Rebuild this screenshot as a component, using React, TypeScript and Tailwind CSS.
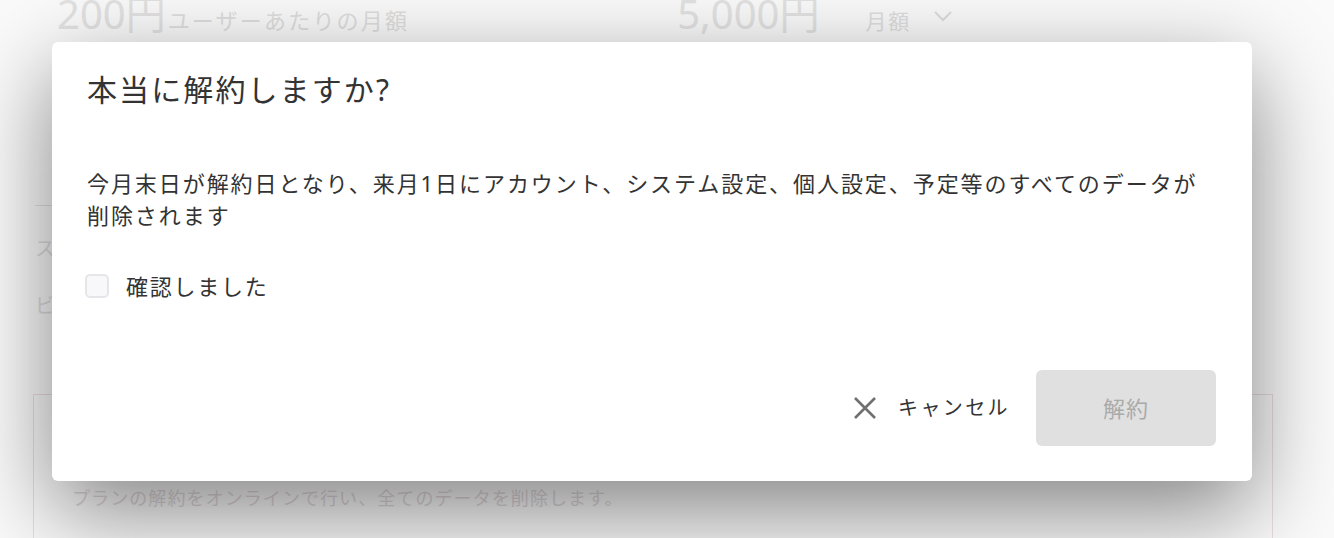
import React, { useState } from 'react';

const font = '"Noto Sans", "Noto Sans CJK JP", sans-serif';

function CloseIcon() {
  return (
    <svg width="24" height="24" viewBox="0 0 24 24" fill="none">
      <path d="M2 2 L22 22 M22 2 L2 22" stroke="#707070" strokeWidth="2.6" strokeLinecap="butt" />
    </svg>
  );
}

function ChevronIcon() {
  return (
    <svg width="20" height="12" viewBox="0 0 20 12" fill="none">
      <path d="M2 2 L10 10 L18 2" stroke="#dcdcdc" strokeWidth="2" />
    </svg>
  );
}

// Page behind the dialog (dimmed)
function BackgroundPage() {
  return (
    <div className="flex flex-col">
      <div className="flex items-baseline -mt-[8px] pl-[57px] h-[48px]">
        <span className="text-[40px] leading-[44px] text-[#e2e2e2]">200円</span>
        <span className="text-[22px] tracking-[0.1em] text-[#dedede] ml-[2px]">ユーザーあたりの月額</span>
        <span className="text-[40px] leading-[44px] text-[#e2e2e2] ml-[268px]">5,000円</span>
        <span className="text-[21px] tracking-[0.08em] text-[#dedede] ml-[46px]">月額</span>
        <span className="ml-[22px] self-center"><ChevronIcon /></span>
      </div>
      <div className="ml-[35px] mr-[120px] mt-[165px] border-t border-[#e2e2e2]" />
      <div className="pl-[35px] mt-[28px] text-[20px] leading-[30px] text-[#dedede]">ステータス</div>
      <div className="pl-[35px] mt-[27px] text-[20px] leading-[30px] text-[#dedede]">ビジネスプラン</div>
      <div className="ml-[33px] mr-[61px] mt-[73px] h-[200px] border border-[#ecdce2] px-[38px] pt-[90px]">
        <p className="text-[18px] tracking-[0.06em] text-[#e0d8db]">
          プランの解約をオンラインで行い、全てのデータを削除します。
        </p>
      </div>
    </div>
  );
}

export default function App() {
  const [checked, setChecked] = useState(false);

  return (
    <div
      className="relative w-[1334px] h-[538px] overflow-hidden bg-[#fafafa]"
      style={{ fontFamily: font }}
    >
      <BackgroundPage />

      {/* Dialog layer */}
      <div className="absolute inset-0 pt-[42px] pl-[52px]">
        <div className="w-[1200px] h-[439px] bg-white rounded-[6px] shadow-[0_30px_90px_rgba(0,0,0,0.48)] px-[35px] pt-[28px] flex flex-col">
          <h2 className="text-[30px] leading-[40px] tracking-[0.07em] text-[#333333] font-normal">
            本当に解約しますか?
          </h2>

          <p className="mt-[57px] text-[22px] leading-[32px] tracking-[0.088em] text-[#333333]">
            今月末日が解約日となり、来月1日にアカウント、システム設定、個人設定、予定等のすべてのデータが削除されます
          </p>

          <label className="mt-[39px] h-[32px] flex items-center cursor-pointer">
            <input
              type="checkbox"
              checked={checked}
              onChange={() => setChecked(!checked)}
              className="appearance-none w-[24px] h-[24px] ml-[-2px] rounded-[5px] border-2 border-[#e6e6ea] bg-[#f8f8fa]"
            />
            <span className="ml-[17px] text-[22px] tracking-[0.08em] text-[#333333]">確認しました</span>
          </label>

          <div className="mt-[68px] flex items-center justify-end pr-[1px]">
            <button className="flex items-center text-[#333333]">
              <CloseIcon />
              <span className="ml-[21px] text-[20px] tracking-[0.12em]">キャンセル</span>
            </button>
            <button
              disabled={!checked}
              className="ml-[26px] w-[180px] h-[76px] rounded-[6px] bg-[#e0e0e0] text-[22px] tracking-[0.05em] text-[#aaaaaa]"
            >
              解約
            </button>
          </div>
        </div>
      </div>
    </div>
  );
}
